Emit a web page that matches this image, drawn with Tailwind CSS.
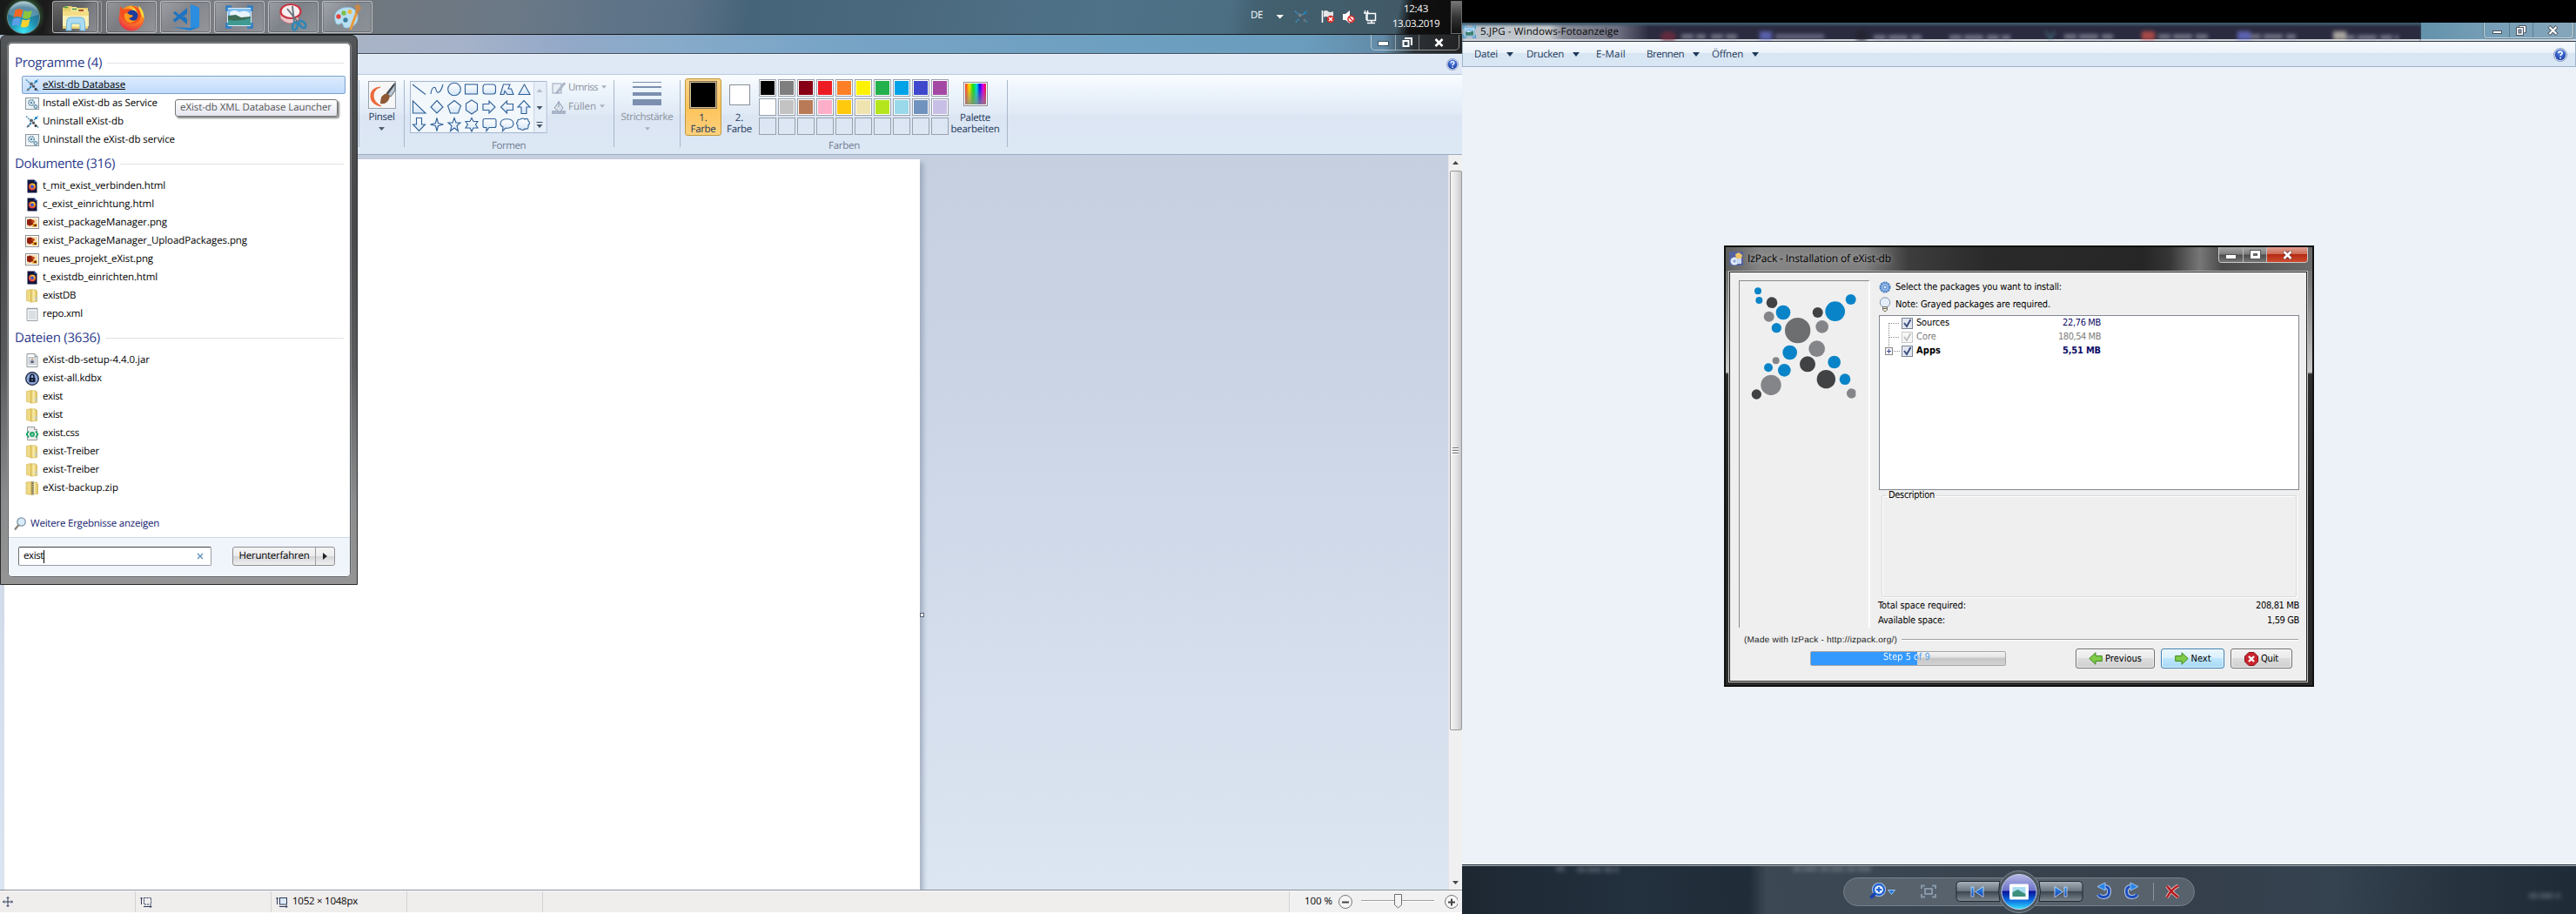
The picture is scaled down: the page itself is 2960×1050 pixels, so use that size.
<!DOCTYPE html>
<html lang="de">
<head>
<meta charset="utf-8">
<title>Desktop</title>
<script src="https://cdn.jsdelivr.net/npm/@tailwindcss/browser@4"></script>
</head>
<body class="w-[2960px] h-[1050px] overflow-hidden bg-black flex font-['Open_Sans','Noto_Sans',sans-serif] text-[11.5px] leading-[16px] text-black font-stretch-[92%] [text-rendering:geometricPrecision]">

<svg class="absolute size-0">
  <defs>
    <linearGradient id="gold" x1="0" x2="1"><stop offset="0" stop-color="#e0c35c"/><stop offset=".45" stop-color="#fbeeb0"/><stop offset="1" stop-color="#d9b94f"/></linearGradient>
    <linearGradient id="glass" x1="0" y1="0" x2="0" y2="1"><stop offset="0" stop-color="#fff"/><stop offset="1" stop-color="#d5e6f7"/></linearGradient>
    <linearGradient id="blueBtn" x1="0" y1="0" x2="0" y2="1"><stop offset="0" stop-color="#2f9bf5"/><stop offset="1" stop-color="#1234a8"/></linearGradient>
    <radialGradient id="orb" cx=".5" cy=".95" r=".95"><stop offset="0" stop-color="#39e6f5"/><stop offset=".45" stop-color="#1f8fb0"/><stop offset=".8" stop-color="#2e6a8a"/><stop offset="1" stop-color="#a9c9cf"/></radialGradient>
    <radialGradient id="orbGlow"><stop offset="0.5" stop-color="#5fd070" stop-opacity=".6"/><stop offset="1" stop-color="#3c7a40" stop-opacity="0"/></radialGradient>
    <radialGradient id="help" cx=".5" cy=".3" r=".8"><stop offset="0" stop-color="#5b8bea"/><stop offset="1" stop-color="#0d2f9c"/></radialGradient>
    <radialGradient id="fox" cx=".65" cy=".2" r=".9"><stop offset="0" stop-color="#ffe23c"/><stop offset=".45" stop-color="#ff8a1c"/><stop offset="1" stop-color="#e5224e"/></radialGradient>
    <symbol id="i-exist" viewBox="0 0 16 16"><path d="M1 1.500l5 5M5.500 11l-4.500 4M10 6l5-4.500M9.500 9l5.500 5.500" stroke="#2f83b5" stroke-width="1.300" stroke-dasharray="2 1" fill="none"/><circle cx="7" cy="6.500" r="2" fill="#5c6a73"/><circle cx="9.500" cy="9.200" r="1.600" fill="#555"/><circle cx="12.500" cy="3.500" r="1.600" fill="#1c84c4"/><circle cx="3.500" cy="12.800" r="1.400" fill="#777"/><circle cx="12" cy="12.500" r="1.500" fill="#3b3b3b"/><circle cx="6" cy="10" r="1.200" fill="#1c84c4"/></symbol>
    <symbol id="i-bat" viewBox="0 0 16 16"><rect x=".5" y="1.500" width="15" height="13" fill="#eef4f8" stroke="#8d979e"/><circle cx="7" cy="7" r="3.300" fill="#dbeaf2" stroke="#5f8aa3" stroke-width="1.500" stroke-dasharray="1.500 .8"/><circle cx="7" cy="7" r="1.200" fill="#5f8aa3"/><circle cx="12" cy="11.500" r="2" fill="#c6dcea" stroke="#4e7d99"/></symbol>
    <symbol id="i-html" viewBox="0 0 16 16"><path d="M2.500 .5h8l3 3v12h-11z" fill="#10143c"/><path d="M10.500 .5v3h3z" fill="#3a6bc4"/><circle cx="8" cy="8.500" r="4" fill="url(#fox)"/><circle cx="8" cy="8.200" r="2" fill="#4557c4"/></symbol>
    <symbol id="i-png" viewBox="0 0 16 16"><rect x=".5" y="1.500" width="15" height="13" fill="#fff" stroke="#8e8e8e"/><rect x="2" y="3" width="12" height="10" fill="#f6ddb0"/><path d="M2 4.500l4-1 3 1.500v5l-4 1.500-3-1.500z" fill="#8f1d0c"/><circle cx="9" cy="6.500" r="1.800" fill="#c1440e"/><path d="M9 9h4.500v3.500H8z" fill="#e19a17"/><circle cx="11.500" cy="11" r="1.300" fill="#5e2608"/></symbol>
    <symbol id="i-folder" viewBox="0 0 16 16"><path d="M1.500 1.500l5-1v14l-5-1z" fill="#eed985" stroke="#d2b553" stroke-width=".6"/><path d="M6.500 .8h5l2 1.500v12l-7 .9z" fill="url(#gold)" stroke="#cfae46" stroke-width=".6"/><path d="M11.500 9h1.500v4h-1.500z" fill="#b5cfdc"/></symbol>
    <symbol id="i-text" viewBox="0 0 16 16"><path d="M2 1.500h12v14H2z" fill="#f3f5f7" stroke="#9aa3aa"/><path d="M3 .5v2M5.500 .5v2M8 .5v2M10.500 .5v2M13 .5v2" stroke="#8d969c"/><path d="M4 5h8M4 7h8M4 9h8M4 11h8M4 13h8" stroke="#b3bec6" stroke-width=".8"/></symbol>
    <symbol id="i-jar" viewBox="0 0 16 16"><path d="M2 .5h9l3 3v12H2z" fill="#fcfcfc" stroke="#8f9699"/><path d="M11 .5v3h3" fill="#ddd" stroke="#8f9699"/><rect x="4" y="4.500" width="8" height="8" fill="#d6dde2" stroke="#9fa8ae" stroke-width=".6"/><path d="M6 8.500h4l-.5 2.500h-3z" fill="#557"/><path d="M8 5.500v2.500" stroke="#d6702a"/></symbol>
    <symbol id="i-kdbx" viewBox="0 0 16 16"><circle cx="8" cy="8" r="7.300" fill="#8fa9d6" stroke="#15203a" stroke-width="1.300"/><rect x="4.500" y="7" width="7" height="5" rx=".6" fill="#131a33"/><path d="M6 7V5.300a2 2 0 014 0V7" fill="none" stroke="#131a33" stroke-width="1.500"/><path d="M8 8.500v2" stroke="#8fa9d6"/></symbol>
    <symbol id="i-css" viewBox="0 0 16 16"><path d="M2.500 .5h8l3 3v12h-11z" fill="#ececec" stroke="#9b9b9b"/><path d="M10.500 .5v3h3" fill="#fff" stroke="#9b9b9b"/><path d="M4 5.500L1.500 9 4 12.500M12 5.500L14.500 9 12 12.500" fill="none" stroke="#0aa05c" stroke-width="1.600"/><circle cx="8" cy="9" r="2.200" fill="none" stroke="#0aa05c" stroke-width="1.400"/><path d="M6 9h4" stroke="#0aa05c"/></symbol>
    <symbol id="i-zip" viewBox="0 0 16 16"><path d="M1 1l6-.5v15L1 14.500z" fill="#eed985" stroke="#cfae46" stroke-width=".6"/><path d="M7 1h6l1.500 2v11.500H7z" fill="url(#gold)" stroke="#cfae46" stroke-width=".6"/><path d="M8.500 .5v15" stroke="#555" stroke-width="2.600" stroke-dasharray="1 .8"/></symbol>
    <symbol id="i-help" viewBox="0 0 16 16"><circle cx="8" cy="8" r="7.500" fill="#e5ecf8" stroke="#6d84b5" stroke-width=".8"/><circle cx="8" cy="8" r="6.200" fill="url(#help)"/><path d="M5.800 6.200C5.800 3.400 10.300 3.500 10.200 6.100c0 1.500-2.100 1.700-2.100 3.200M8.100 10.800v1.700" fill="none" stroke="#fff" stroke-width="1.600"/></symbol>
    <symbol id="i-photo" viewBox="0 0 16 16"><rect x="2" y="2.500" width="12" height="11" fill="#fff" stroke="#6fa7cf"/><path d="M3 3.500h10v4H3z" fill="#8fc6ef"/><path d="M3 7.500l4 1 6-1.500v5.500H3z" fill="#3b7f74"/><path d="M.5 4.500v-4h4M11.500 .5h4v4M15.500 11.500v4h-4M4.500 15.500h-4v-4" fill="none" stroke="#4b9ad4" stroke-width="1.600"/></symbol>
  </defs>
</svg>

<!-- Left monitor -->
<div class="relative w-[1680px] h-[1050px] flex flex-col overflow-hidden bg-white shrink-0">

  <!-- Taskbar -->
  <div class="h-[40px] shrink-0 flex border-b border-[#16191c] bg-[linear-gradient(100deg,#181a19_0px,#1b1b1b_55px,#6b6d72_105px,#7c7e85_200px,#70777f_420px,#6a7886_590px,#5f7488_700px,#5a7085_780px,#466479_850px,#4a687d_1000px,#4f7288_1250px,#4c6e83_1395px,#42606f_1425px,#425a68_1585px,#111_1600px,#0b0b0b_1680px)]">
    <svg class="w-[60px] h-[39px] shrink-0" viewBox="0 0 60 39">
      <circle cx="28" cy="18" r="24" fill="url(#orbGlow)"/>
      <circle cx="27" cy="20" r="18.500" fill="url(#orb)" stroke="#7a9aa0" stroke-width=".8"/>
      <path d="M10 17a17 15 0 0134 0q-15 6-34 0z" fill="#fff" opacity=".22"/>
      <path d="M17.500 11.500q4.500-2.500 8.800 0L24.500 20q-4.500-2-9 .3z" fill="#f26522"/>
      <path d="M27.800 12.300q4.500 2.300 8.900-.6L35 20.200q-4.500 2.600-8.900.5z" fill="#8cc63e"/>
      <path d="M15 21.800q4.500-2.300 8.900-.3l-1.900 8q-4.300-2-8.500.6z" fill="#5a9fe8"/>
      <path d="M25.700 22.200q4.400 2.200 8.800-.4l-2 8.300q-4.300 2.500-8.700.3z" fill="#ffd32e"/>
    </svg>
    <div class="flex pt-px gap-[4px]">
      <div class="w-[58px] h-[37px] flex">
        <div class="w-[53px] rounded-[3px] border border-[#c9cacc]/80 ring-1 ring-inset ring-black/20 bg-[linear-gradient(135deg,#fff5,#fff1_45%,#fff3)] flex items-center justify-center">
          <svg class="w-[34px] h-[32px]" viewBox="0 0 34 32"><path d="M2 5l4-2h6l2 2h17v24H2z" fill="#e8cf6d"/><path d="M12 4h6l1 3h12v20H8z" fill="#f5e59b"/><path d="M2 9h30v17H2z" fill="#fbf0b6"/><path d="M2 9h30v5H2z" fill="#f3dd85"/><path d="M4 4.500h4M13 6.500h5M20 8h6" stroke="#3e9e49" stroke-width="1.500"/><path d="M21 8h5" stroke="#c4302b" stroke-width="1.500"/><path d="M6 31l1-12q1-3 4-3h12q3 0 4 3l1 12h-6v-8H12v8z" fill="#a9dbf3" stroke="#6fb4da"/></svg>
        </div>
        <div class="w-[4px] border-r border-y rounded-r-[3px] border-[#aaabad]/80"></div>
      </div>
      <div class="w-[58px] h-[37px] rounded-[3px] border border-[#c9cacc]/80 ring-1 ring-inset ring-black/20 bg-[linear-gradient(135deg,#fff4,#fff1_45%,#fff3)] flex items-center justify-center">
        <svg class="w-[32px] h-[32px]" viewBox="0 0 32 32"><circle cx="16" cy="17" r="14.500" fill="url(#fox)"/><path d="M3 3q2 3 5 4 5-2 9 0l-3 3q-4 0-5 3l3 3q5 5 10 1 2-2 1-6-2-6-7-8 8-1 11 8 1 9-7 12-8 2-13-4-6-6-4-14z" fill="#f4501f"/><circle cx="17" cy="14" r="6.500" fill="#1c3c9e"/><path d="M8 12q4-2 6 1 3 0 4 1-2 3-5 3 3 4 8 2-4 5-10 2-4-4-3-9z" fill="#ff9a1c"/><path d="M24 2q7 6 6.500 16l-4-7z" fill="#ffd83a"/></svg>
      </div>
      <div class="w-[58px] h-[37px] rounded-[3px] border border-[#c9cacc]/80 ring-1 ring-inset ring-black/20 bg-[linear-gradient(135deg,#fff4,#fff1_45%,#fff3)] flex items-center justify-center">
        <svg class="w-[34px] h-[32px]" viewBox="0 0 34 32"><path d="M23 1l10 4v22l-10 4-21-4 21 1z" fill="#1e7fd0"/><path d="M23 1v27l10-1V5z" fill="#2a8de0"/><path d="M19 5v19L3 11l2-2 9 7z" fill="#1c74c2"/><path d="M19 5v6L5 21.500 2.500 19z" fill="#1c74c2"/><path d="M19 11.500v6l-4-3z" fill="#7e8692"/></svg>
      </div>
      <div class="w-[58px] h-[37px] rounded-[3px] border border-[#c9cacc]/80 ring-1 ring-inset ring-black/20 bg-[linear-gradient(135deg,#fff4,#fff1_45%,#fff3)] flex items-center justify-center">
        <svg class="w-[32px] h-[28px]" viewBox="0 0 32 28"><rect x="2" y="3" width="28" height="21" fill="#d9edf9"/><path d="M3 4h26v11H3z" fill="#7fbdf0"/><path d="M5 8q6-4 11 0 7-3 12 1v5H5z" fill="#e8f4fc"/><path d="M3 12l9-1 6 3 11-1v6H3z" fill="#3d6e57"/><path d="M3 17q12 2 26-2v8H3z" fill="#3f9a92"/><path d="M1.500 7V1.500H7M25 1.500h5.500V7M30.500 20v5.500H25M7 25.500H1.500V20" fill="none" stroke="#2f7ec4" stroke-width="2.600"/></svg>
      </div>
      <div class="w-[58px] h-[37px] rounded-[3px] border border-[#c9cacc]/80 ring-1 ring-inset ring-black/20 bg-[linear-gradient(135deg,#fff4,#fff1_45%,#fff3)] flex items-center justify-center">
        <svg class="w-[34px] h-[34px]" viewBox="0 0 34 34"><path d="M2 11v7q10 11 21 2v-9z" fill="#e9c6ca" stroke="#b35b64" stroke-width=".8"/><ellipse cx="14" cy="10" rx="11.500" ry="8" fill="#f7eff0" stroke="#c93440" stroke-width="2.200"/><path d="M10 7l12 15M16 4l2 18" stroke="#6a7580" stroke-width="2"/><ellipse cx="19" cy="27" rx="2.800" ry="4.500" fill="none" stroke="#2d86b5" stroke-width="2.600" transform="rotate(15 19 27)"/><ellipse cx="27.500" cy="25" rx="2.800" ry="4.800" fill="none" stroke="#2d86b5" stroke-width="2.600" transform="rotate(-40 27.500 25)"/></svg>
      </div>
      <div class="w-[58px] h-[37px] rounded-[3px] border border-[#c9cacc]/80 ring-1 ring-inset ring-black/20 bg-[linear-gradient(135deg,#fff5,#fff2_45%,#fff3)] flex items-center justify-center">
        <svg class="w-[34px] h-[32px]" viewBox="0 0 34 32"><path d="M3 20Q0 9 12 5q14-3 17 8 2 12-11 15-6 1-6-4-1-3-4 0-4 1-5-4z" fill="#b9dff2" stroke="#7fb6d6" stroke-width=".8"/><circle cx="7" cy="15" r="2.700" fill="#e2443b"/><circle cx="13" cy="11" r="2.700" fill="#7bbf45"/><circle cx="20" cy="9.500" r="2.500" fill="#f1b83a"/><circle cx="15" cy="19" r="2.700" fill="#3b7f9e"/><path d="M19 30l7-19 3 1-7 18z" fill="#e79a3c"/><path d="M26 11l1-5-2-4q4 1 5-2 1 4 3 5l-4 7z" fill="#c98847"/></svg>
      </div>
    </div>
    <div class="grow"></div>
    <div class="flex items-center text-white w-[253px] shrink-0">
      <span class="w-[28px] -mt-[3px] pl-[10px]"><span data-w="14">DE</span></span>
      <svg class="w-[135px] h-[39px] shrink-0" viewBox="1455 0 135 39">
        <path d="M1466.500 17h8.500l-4.200 4.500z" fill="#fff"/>
        <g transform="translate(1487 11)" opacity=".85"><path d="M1 1.500l5 5M5.500 11l-4.500 4M10 6l5-4.500M9.500 9l5.500 5.500" stroke="#3d9bd6" stroke-width="1.500" stroke-dasharray="2 1" fill="none"/><circle cx="7" cy="6.500" r="2" fill="#7b8a93"/><circle cx="9.500" cy="9.200" r="1.600" fill="#555"/><circle cx="12.500" cy="3.500" r="1.600" fill="#1c84c4"/><circle cx="12" cy="12.500" r="1.500" fill="#777"/></g>
        <path d="M1519.500 12v14" stroke="#fff" stroke-width="1.600"/><path d="M1521 13q3-2 5 0t6 0v7q-3 2-6 0t-5 0z" fill="#e6e6e6"/><circle cx="1529" cy="22" r="4.300" fill="#d3302c"/><path d="M1527 20l4 4m0-4l-4 4" stroke="#fff" stroke-width="1.400"/>
        <path d="M1543 16h3l5-4v15l-5-4h-3z" fill="#fff"/><circle cx="1552.500" cy="22" r="3.600" fill="#fff" stroke="#d3302c" stroke-width="1.600"/><path d="M1550 19.500l5 5" stroke="#d3302c" stroke-width="1.500"/>
        <path d="M1571 15.500h9.500v8h-9.500zM1576 24v2M1571 26.500h9" fill="none" stroke="#fff" stroke-width="1.500"/><path d="M1568.500 12v3M1571.500 12v3M1567 15h6M1570 16v7" stroke="#fff" stroke-width="1.400"/>
      </svg>
      <div class="w-[56px] flex flex-col items-center gap-px ml-[9px] -mt-px shrink-0"><span data-w="28">12:43</span><span data-w="54">13.03.2019</span></div>
      <div class="w-[13px] h-[38px] ml-[12px] border border-[#6b6b6b] bg-linear-to-b from-[#777] via-[#333] to-[#111] shrink-0"></div>
    </div>
  </div>

  <!-- Paint title bar -->
  <div class="h-[22px] shrink-0 flex justify-end border-b border-[#46515e] bg-[linear-gradient(90deg,#a9b3c6_411px,#a5b2c9_530px,#92a8c8_660px,#88abca_760px,#78a4c6_950px,#6d9fc0_1300px,#6a9cbd_1500px,#628ba7_1590px,#2c3136_1625px,#222_1680px)]">
    <div class="mr-[3px] w-[102px] h-[18px] rounded-b-[5px] border border-t-0 border-white/50 flex text-white">
      <div class="w-[28px] border-r border-white/40 flex items-end justify-center pb-[5px]"><div class="w-[11px] h-[4px] bg-white ring-1 ring-black/40"></div></div>
      <div class="w-[27px] border-r border-white/40 flex items-center justify-center"><svg class="w-[12px] h-[12px]" viewBox="0 0 12 12"><path d="M4 2V1h7v7h-1M1.500 4h6v6h-6z" fill="none" stroke="#fff" stroke-width="2"/></svg></div>
      <div class="grow flex items-center justify-center"><svg class="w-[11px] h-[10px]" viewBox="0 0 11 10"><path d="M1.500 1l8 8M9.500 1l-8 8" stroke="#fff" stroke-width="2.600"/></svg></div>
    </div>
  </div>
  <!-- Ribbon tabs -->
  <div class="h-[24px] shrink-0 border-t border-[#edf3fa] border-b border-b-[#b9cbdf] bg-[#dfe9f5] flex justify-end items-center pr-[4px]"><svg class="size-[14px]"><use href="#i-help"/></svg></div>

  <!-- Ribbon -->
  <div class="h-[92px] shrink-0 border-b border-[#9badc4] bg-[linear-gradient(180deg,#fafdff,#eef5fc_18%,#dfe9f5_50%,#dbe5f3_51%,#dde8f5)] pl-[412px] pt-[6px] flex text-[#1e395b]">
    <div class="w-px h-[77px] bg-[#a9b8cb] shrink-0"></div>
    <div class="w-[51px] flex flex-col items-center shrink-0">
      <svg class="w-[32px] h-[32px] mt-px" viewBox="0 0 32 32"><rect x=".5" y=".5" width="31" height="31" fill="#f6f6f6" stroke="#9aa4ae"/><path d="M14 7Q2 8 3 19q1 8 12 10-9-5-9-12 0-7 8-10z" fill="#ec6a3c" stroke="#ec6a3c"/><path d="M31 2L21 14l5 4 5-7z" fill="#b9c6d1" stroke="#5c6873"/><path d="M30 4l-8 11" stroke="#3c4650" stroke-width="2"/><path d="M22 14q-8 1-8 12 8 2 11-8z" fill="#8d5a35"/></svg>
      <span class="mt-[2px]" data-w="30">Pinsel</span>
      <svg class="w-[7px] h-[4px] mt-[3px]" viewBox="0 0 7 4"><path d="M0 0h7L3.500 4z" fill="#4f5b6b"/></svg>
    </div>
    <div class="w-px h-[77px] bg-[#a9b8cb] shrink-0"></div>
    <div class="w-[240px] shrink-0 flex flex-col pl-[6px]">
      <div class="flex h-[68px] pt-px">
        <svg class="w-[158px] h-[60px] shrink-0" viewBox="0 0 158 60" fill="url(#glass)" stroke="#2f6097" stroke-width="1.100">
          <rect x=".5" y=".5" width="156.500" height="59" fill="#f2f7fc" stroke="#a5b8d0"/>
          <path d="M142.500 1h14v58h-14z" fill="#e6eef8" stroke="none"/><path d="M142.500 1v58" stroke="#cbd8e8"/>
          <path d="M3 4l15 11.500" fill="none"/>
          <path d="M24 15c1-8 5-10 6-5s5 5 8-6" fill="none"/>
          <circle cx="51" cy="9.500" r="7.300"/><rect x="63.500" y="4" width="14" height="11"/><rect x="84" y="4" width="14.500" height="11" rx="3"/>
          <path d="M104 15.500L107.500 4h7.500l-2 5h3.500l2.500 6.500h-7l-3-4-1 4z"/><path d="M131.500 4l6.500 11.500h-13z"/>
          <path d="M3.500 23v14H18z"/><path d="M31 22.500l7 7.500-7 7-7-7z"/><path d="M51 22.500l7.500 6-3 8.500h-9l-3-8.500z"/><path d="M71 22l6.500 4v7.500L71 38l-6.500-4.500V26z"/>
          <path d="M84 26.500h7V23l7 7-7 7v-3.500h-7z"/><path d="M118.500 26.500h-7V23l-7 7 7 7v-3.500h7z"/><path d="M128 37.500V30h-4l7-7.500 7 7.500h-4v7.500z"/>
          <path d="M7.500 42.500V50h-4l7 7.500 7-7.500h-4v-7.500z"/><path d="M31 42.500l1.500 6 6 1.500-6 1.500-1.500 6-1.500-6-6-1.500 6-1.500z"/><path d="M51 42.500l2 5.500h5l-4 3.500 1.500 6L51 54l-4.500 3.500 1.500-6-4-3.500h5z"/><path d="M71 42.500l2 4h5l-2.500 3.500 2.500 4h-5l-2 4-2-4h-5l2.500-4-2.500-3.500h5z"/>
          <path d="M86 43.500h11q2 0 2 2v6q0 2-2 2h-6l-3 4v-4h-2q-2 0-2-2v-6q0-2 2-2z"/><path d="M104 49c0-7 15-7 15 0 0 5-6 5.500-9 5l-3.500 3.500.5-4.500q-3-1-3-4z"/><path d="M127 44q3-2 5 0 4-2 4 2 3 2 0 5 1 5-4 4-3 3-5 0-4 1-3-4-3-3 0-4-1-3 3-3z"/>
          <g stroke="none"><path d="M145.500 13h7l-3.500-4z" fill="#b4bfce"/><path d="M145.500 29h7l-3.500 4zM145.500 50h7l-3.500 4z" fill="#44546a"/></g><path d="M145.500 47.500h7" stroke="#44546a"/>
        </svg>
        <div class="flex flex-col gap-[6px] pl-[5px] text-[#8c929c]">
          <div class="flex items-center h-[16px]"><svg class="w-[16px] h-[14px] mr-[3px]" viewBox="0 0 16 14"><rect x="1" y="2" width="10" height="11" fill="#e9eef5" stroke="#9ba7b9"/><path d="M14 1L6 11l-1 2 2-.5L15.500 2z" fill="#cfd7e3" stroke="#8c9ab0"/></svg><span data-w="34">Umriss</span><svg class="w-[6px] h-[4px] ml-[4px] -mt-[2px]" viewBox="0 0 7 4"><path d="M0 0h7L3.500 4z" fill="#a9b1be"/></svg></div>
          <div class="flex items-center h-[16px]"><svg class="w-[16px] h-[15px] mr-[3px]" viewBox="0 0 16 15"><path d="M0 11h16v4H0z" fill="#a9b5c8"/><path d="M8 1l5 7-4 5-6-5z" fill="#d9e0ea" stroke="#8c9ab0"/><path d="M8 0v7" stroke="#8c9ab0"/></svg><span data-w="32">Füllen</span><svg class="w-[6px] h-[4px] ml-[4px] -mt-[2px]" viewBox="0 0 7 4"><path d="M0 0h7L3.500 4z" fill="#a9b1be"/></svg></div>
        </div>
      </div>
      <div class="pl-[94px]"><span class="text-[#6f7d93]" data-w="39">Formen</span></div>
    </div>
    <div class="w-px h-[77px] bg-[#a9b8cb] shrink-0"></div>
    <div class="w-[75px] shrink-0 flex flex-col items-center pt-[2px] text-[#8c929c]">
      <svg class="w-[33px] h-[28px]" viewBox="0 0 33 28" fill="#7c8fb0"><path d="M0 0h33v1H0zM0 5h33v2H0zM0 12h33v4H0zM0 20h33v7H0z"/></svg>
      <span class="mt-[5px]" data-w="60">Strichstärke</span>
      <svg class="w-[6px] h-[4px] mt-[3px]" viewBox="0 0 7 4"><path d="M0 0h7L3.500 4z" fill="#a9b1be"/></svg>
    </div>
    <div class="w-px h-[77px] bg-[#a9b8cb] shrink-0"></div>
    <div class="w-[375px] shrink-0 flex flex-col -mt-[2px] pl-[5px]">
      <div class="h-[70px] flex">
        <div class="w-[42px] h-[66px] rounded-[3px] border border-[#c09a3e] bg-linear-to-b from-[#fbd38a] via-[#fdc35a] to-[#fdd17c] flex flex-col items-center pt-[2px] leading-[13px]">
          <div class="w-[32px] h-[32px] border border-[#7d6f55] p-px bg-[#d9c193]"><div class="h-full bg-black"></div></div>
          <span class="mt-[4px]">1.</span><span data-w="29">Farbe</span>
        </div>
        <div class="w-[41px] flex flex-col items-center pt-[7px] leading-[13px]">
          <div class="w-[24px] h-[24px] border border-[#8a8f97] bg-white"></div>
          <span class="mt-[8px]">2.</span><span data-w="29">Farbe</span>
        </div>
        <div id="swatches" class="grid grid-cols-10 gap-[2px] pt-px pl-[2px] w-[220px] content-start shrink-0"></div>
        <div class="w-[60px] flex flex-col items-center pt-[4px] pl-px leading-[13px]">
          <div class="w-[28px] h-[28px] border border-[#8a8f97] p-px bg-white"><div class="h-full bg-[linear-gradient(180deg,#8880_20%,#888c),linear-gradient(90deg,#e33,#fd0_20%,#1d1_38%,#0dd_55%,#11e_70%,#d0e_85%,#e13)]"></div></div>
          <span class="mt-[7px]" data-w="35">Palette</span><span data-w="56">bearbeiten</span>
        </div>
      </div>
      <div class="pl-[165px]"><span class="text-[#6f7d93]" data-w="36">Farben</span></div>
    </div>
    <div class="w-px h-[77px] bg-[#a9b8cb] shrink-0"></div>
  </div>

  <!-- Canvas -->
  <div class="h-[845px] shrink-0 flex border-b border-[#8a8f94] bg-[linear-gradient(180deg,#c5cfdf,#cbd5e6_35%,#dce6f2)]">
    <div class="w-[1664px] pl-[5px] pt-[5px] flex">
      <div class="w-[1052px] h-full bg-white shadow-[4px_4px_5px_#8f9bb0aa]"></div>
      <div class="w-[5px] h-[5px] mt-[521px] border border-[#55606e] bg-white"></div>
    </div>
    <div class="w-[16px] bg-[#f0f0f0] border-l border-[#e2e5ea] flex flex-col items-center pt-[7px]">
      <svg class="w-[7px] h-[4px] shrink-0" viewBox="0 0 7 4"><path d="M0 4h7L3.500 0z" fill="#444"/></svg>
      <div class="w-[14px] h-[643px] mt-[7px] rounded-[2px] border border-[#979797] bg-linear-to-r from-[#f5f5f5] via-[#e4e4e6] to-[#c9cacd] flex items-center justify-center"><div class="w-[7px] h-[8px] bg-[repeating-linear-gradient(180deg,#777_0_1px,#fff_1px_2px,#ddd_2px_3px)]"></div></div>
      <div class="grow"></div>
      <svg class="w-[7px] h-[4px] mb-[6px] shrink-0" viewBox="0 0 7 4"><path d="M0 0h7L3.500 4z" fill="#444"/></svg>
    </div>
  </div>

  <!-- Paint status bar -->
  <div class="h-[25px] shrink-0 flex items-center bg-[#f0eded] border-t border-[#fafafa]">
    <div class="w-[156px] h-full border-r border-[#d5d2d5] flex items-center pl-[3px] shrink-0"><svg class="size-[12px]" viewBox="0 0 12 12"><path d="M6 .5v11M.5 6h11M4.500 2L6 .5 7.500 2M4.500 10L6 11.500 7.500 10M2 4.500L.5 6 2 7.500M10 4.500L11.500 6 10 7.500" fill="none" stroke="#2b3a5a"/></svg></div>
    <div class="w-[156px] h-full border-r border-[#d5d2d5] flex items-center pl-[5px] shrink-0"><svg class="w-[14px] h-[13px]" viewBox="0 0 14 13" fill="none" stroke="#2b3a5a"><path d="M1.500 1v8M0 2.500L1.500 1 3 2.500M4 11.500h9M11.500 10l1.500 1.500-1.500 1.500"/><rect x="4.500" y="1.500" width="8" height="7.500" stroke-dasharray="2 1"/></svg></div>
    <div class="w-[156px] h-full border-r border-[#d5d2d5] flex items-center pl-[5px] shrink-0"><svg class="w-[14px] h-[13px] mr-[5px]" viewBox="0 0 14 13" fill="none" stroke="#2b3a5a"><path d="M1.500 1v8M0 2.500L1.500 1 3 2.500M4 11.500h9M11.500 10l1.500 1.500-1.500 1.500"/><rect x="4.500" y="1.500" width="8" height="7.500" fill="#dceaf8"/></svg><span data-w="75">1052 × 1048px</span></div>
    <div class="w-[156px] h-full border-r border-[#d5d2d5] shrink-0"></div>
    <div class="w-[858px] h-full border-r border-[#d5d2d5] shrink-0"></div>
    <div class="grow h-full bg-[#f1f1f1] flex items-center pl-[17px]">
      <span data-w="32">100 %</span>
      <svg class="w-[138px] h-[24px] ml-[6px] shrink-0" viewBox="0 0 138 24"><g fill="#f6f6f6" stroke="#777"><circle cx="9" cy="12" r="7.500"/><circle cx="131" cy="12" r="7.500"/></g><path d="M5 12.500h8M127 12.500h8M131 8.500v8" stroke="#444" stroke-width="2"/><path d="M27 10.500h84" stroke="#a0a0a0"/><path d="M27 11.500h84" stroke="#fff"/><path d="M65.500 3.500h8v12l-4 3.500-4-3.500z" fill="#f4f4f4" stroke="#6f6f6f"/></svg>
    </div>
  </div>
  <div class="h-[2px] bg-white shrink-0"></div>

  <!-- Start menu overlay -->
  <div class="absolute left-0 top-[40px] w-[411px] h-[632px] border border-[#2b2b2b] rounded-t-[7px] bg-[linear-gradient(180deg,#545759,#4b4d4f_8%,#47494b_35%,#5a5c5d_60%,#8b8c8d_85%,#949494)] p-[8px] pr-[7px]">
    <div class="h-full rounded-[5px] border border-[#5d6064] ring-1 ring-[#a0a3a6]/60 bg-white overflow-hidden flex flex-col">
      <div class="grow pt-[9px] pl-[7px] pr-[8px]" id="results"></div>
      <div class="h-[31px] flex items-center pl-[6px] text-[#151c70] shrink-0">
        <svg class="w-[14px] h-[16px] mr-[5px]" viewBox="0 0 14 16"><circle cx="8.500" cy="5.500" r="4.700" fill="#d7ecf8" stroke="#7e95a6" stroke-width="1.300"/><path d="M5.500 9L1 14.500" stroke="#8a8378" stroke-width="2.200"/></svg>
        <span data-w="148">Weitere Ergebnisse anzeigen</span>
      </div>
      <div class="h-[45px] bg-[#f0f4fb] border-t border-[#ccd9ea] flex shrink-0 pt-[10px] pl-[11px]">
        <div class="w-[222px] h-[22px] rounded-[2px] border border-[#9a9da3] border-t-[#3f4247] border-l-[#6d7075] bg-white flex items-center pl-[5px] pr-[8px]"><span data-w="23">exist</span><span class="w-px h-[15px] bg-black"></span><span class="grow"></span><svg class="size-[8px]" viewBox="0 0 8 8"><path d="M1 1l6 6M7 1L1 7" stroke="#5b8fb9" stroke-width="1.300"/></svg></div>
        <div class="ml-[24px] h-[22px] w-[118px] rounded-[3px] border border-[#8e8f91] bg-[linear-gradient(180deg,#f4f4f4,#ececee_48%,#d5d6d9_52%,#f0f0f1)] flex">
          <div class="w-[95px] border-r border-[#9b9c9e] flex items-center justify-center"><span data-w="81">Herunterfahren</span></div>
          <div class="grow flex items-center justify-center"><svg class="w-[5px] h-[8px]" viewBox="0 0 5 8"><path d="M0 0v8l5-4z" fill="#222"/></svg></div>
        </div>
      </div>
    </div>
  </div>
  <!-- Tooltip -->
  <div class="absolute left-[201px] top-[114px] w-[187px] h-[20px] rounded-[3px] border border-[#767676] bg-linear-to-b from-white to-[#e4e5f0] shadow-[2px_2px_2px_#0007] flex items-center pl-[5px] text-[#575757]"><span data-w="174">eXist-db XML Database Launcher</span></div>
</div>

<!-- Right monitor: photo viewer -->
<div class="w-[1280px] h-[1050px] shrink-0 flex flex-col">
  <div class="h-[26px] bg-black shrink-0"></div>
  <div class="relative h-[22px] shrink-0 border-b border-[#2b3340] bg-[#2b2b40] flex overflow-hidden">
    <div class="w-[1102px] shrink-0 flex items-center shadow-[inset_0_3px_3px_#3f5a6c,inset_0_-2px_0_#cfd3da] bg-[linear-gradient(90deg,#b9c3cc,#c6c9cc_100px,#8d8f9b_115px,#6d6e7f_180px,#2b2b40_215px)]">
      <svg class="size-[15px] mr-[5px] ml-px shrink-0"><use href="#i-photo"/></svg>
      <span class="text-[#0b0b0b]" data-w="159">5.JPG - Windows-Fotoanzeige</span>
      <svg class="w-[900px] h-[20px] shrink-0 ml-[42px] blur-[2px]" viewBox="1902 26 900 20">
        <g opacity=".7"><ellipse cx="1917" cy="41" rx="9" ry="6" fill="#7e2b3c"/><path d="M1932 41h28M1966 41h30M2153 42h55M2240 42h70M2372 41h56M2480 41h58M2584 41h54M2692 42h64" stroke="#9a9aad" stroke-width="5" stroke-dasharray="14 3 22 4"/><path d="M2022 35h14v10h-14z" fill="#6d78d8"/><path d="M2040 41h56" stroke="#8587a0" stroke-width="5"/><circle cx="2139" cy="40" r="7" fill="#23232d"/><path d="M2351 35l5 9 5-9" stroke="#4f8f95" stroke-width="2" fill="none"/><path d="M2461 35h15v10h-15z" fill="#e0574a"/><path d="M2571 35h15v10h-15z" fill="#737be0"/><path d="M2681 35h15v10h-15z" fill="#e0d9c8"/></g>
      </svg>
    </div>
    <div class="grow bg-[linear-gradient(90deg,#6392ab,#78a0b8_50%,#86a6ba)] shadow-[inset_0_-2px_0_#cfdbe4] flex justify-end">
      <div class="mr-[3px] w-[103px] h-[18px] rounded-b-[4px] border border-t-0 border-[#dfe8ee]/70 ring-1 ring-[#4d6472]/60 flex">
        <div class="w-[29px] border-r border-[#4d6472]/60 flex items-end justify-center pb-[4px]"><div class="w-[11px] h-[4px] bg-white border border-[#4b5560]"></div></div>
        <div class="w-[27px] border-r border-[#4d6472]/60 flex items-center justify-center"><svg class="w-[12px] h-[12px]" viewBox="0 0 12 12"><path d="M3.500 2.500v-2h8v8h-2" fill="#fff" stroke="#4b5560"/><rect x=".5" y="2.500" width="8" height="9" fill="#fff" stroke="#4b5560"/><rect x="3" y="5" width="3" height="4" fill="#9ab" stroke="#4b5560"/></svg></div>
        <div class="grow flex items-center justify-center"><svg class="w-[13px] h-[12px]" viewBox="0 0 13 12"><path d="M2 1.500l9 9M11 1.500l-9 9" stroke="#4b5560" stroke-width="4"/><path d="M2.500 2l8 8M10.500 2l-8 8" stroke="#fff" stroke-width="2.200"/></svg></div>
      </div>
    </div>
  </div>
  <div class="h-[29px] shrink-0 border border-t-white border-[#a0b3c9] border-b-[#9fb2ca] bg-[linear-gradient(180deg,#f4f9fd,#eaf2f9_45%,#d8e5f2_46%,#d9e7f4)] flex items-center pl-[13px] text-[#1e395b]">
    <div class="w-[60px] flex items-center"><span data-w="27">Datei</span><svg class="w-[8px] h-[5px] ml-[10px]" viewBox="0 0 8 5"><path d="M0 0h8L4 5z" fill="#1e395b"/></svg></div>
    <div class="w-[80px] flex items-center"><span data-w="43">Drucken</span><svg class="w-[8px] h-[5px] ml-[10px]" viewBox="0 0 8 5"><path d="M0 0h8L4 5z" fill="#1e395b"/></svg></div>
    <div class="w-[58px] flex items-center"><span data-w="34">E-Mail</span></div>
    <div class="w-[75px] flex items-center"><span data-w="43">Brennen</span><svg class="w-[8px] h-[5px] ml-[10px]" viewBox="0 0 8 5"><path d="M0 0h8L4 5z" fill="#1e395b"/></svg></div>
    <div class="flex items-center"><span data-w="36">Öffnen</span><svg class="w-[8px] h-[5px] ml-[10px]" viewBox="0 0 8 5"><path d="M0 0h8L4 5z" fill="#1e395b"/></svg></div>
    <div class="grow"></div>
    <svg class="size-[16px] mr-[9px]"><use href="#i-help"/></svg>
  </div>

  <!-- Photo: installer window -->
  <div class="h-[916px] shrink-0 bg-[#edf2f9] flex flex-col items-center pt-[205px]">
    <div class="w-[678px] h-[507px] border-2 border-[#111] bg-[linear-gradient(180deg,#6b6b6b,#777_8%,#c9c9c9_28.5%,#2d2d2d_29%,#222_60%,#2b2b2b)] flex flex-col font-['DejaVu_Sans_Condensed','DejaVu_Sans',sans-serif] font-stretch-condensed text-[11px] leading-[14px] pb-[3px]">
      <div class="h-[27px] shrink-0 flex justify-between bg-[linear-gradient(90deg,#5d5d5d,#858585_40px,#7f7f7f_160px,#3d3d3d_210px,#2a2a2a_300px,#262626_480px,#353535_510px,#777_545px,#4b4b4b_570px,#6a6a6a)]">
        <div class="flex items-center pl-[4px] font-['Open_Sans','Noto_Sans',sans-serif] font-stretch-[92%] text-[12px] -mt-px">
          <svg class="w-[16px] h-[16px] mr-[5px]" viewBox="0 0 16 16"><rect width="16" height="16" fill="#5562a0"/><circle cx="6" cy="11" r="4.500" fill="#dfe9f8"/><circle cx="6" cy="11" r="1.700" fill="#8fa8d6"/><path d="M7 3l4-2 4 3-1 4H8z" fill="#f0c56a"/><path d="M8 8h6v6H9z" fill="#c8d7f2"/></svg>
          <span class="[text-shadow:0_0_6px_#bbb]" data-w="165">IzPack - Installation of eXist-db</span>
        </div>
        <div class="mr-[5px] h-[18px] w-[103px] rounded-b-[4px] border border-t-0 border-[#c9c9c9] flex overflow-hidden">
          <div class="w-[28px] border-r border-[#bbb] bg-[linear-gradient(180deg,#a5a5a5,#7d7d7d_48%,#4b4b4b_52%,#777)] flex items-end justify-center pb-[4px]"><div class="w-[11px] h-[4px] bg-white ring-1 ring-[#555]"></div></div>
          <div class="w-[27px] border-r border-[#bbb] bg-[linear-gradient(180deg,#a5a5a5,#7d7d7d_48%,#4b4b4b_52%,#777)] flex items-center justify-center"><div class="w-[11px] h-[9px] border-3 border-white bg-[#666] ring-1 ring-[#555]"></div></div>
          <div class="grow bg-[linear-gradient(180deg,#e0a093,#cf6a55_45%,#b52a14_50%,#cf4c30)] flex items-center justify-center"><svg class="w-[11px] h-[10px]" viewBox="0 0 11 10"><path d="M1.500 .5l8 9M9.500 .5l-8 9" stroke="#633" stroke-width="4"/><path d="M1.500 1l8 8M9.500 1l-8 8" stroke="#fff" stroke-width="2.500"/></svg></div>
        </div>
      </div>
      <div class="grow ml-[3px] mr-[5px] border border-[#c4c4c4] ring-1 ring-inset ring-[#222] bg-[#efefef] flex flex-col pt-[10px] pl-[11px] pr-[10px]">
        <div class="h-[399px] flex shrink-0">
          <div class="w-[151px] h-full border-l border-t border-[#8b8b8b] border-r-2 border-r-white shrink-0">
            <svg class="w-[149px] h-[150px]" viewBox="87 161 447 450" fill="#0a84c8">
              <circle cx="150" cy="195" r="12"/><circle cx="154" cy="227" r="12"/><circle cx="237" cy="269" r="25"/><circle cx="214" cy="322" r="17"/><circle cx="416" cy="265" r="34"/><circle cx="470" cy="224" r="18"/><circle cx="260" cy="407" r="25"/><circle cx="186" cy="459" r="15"/><circle cx="241" cy="468" r="22"/><circle cx="413" cy="440" r="22"/><circle cx="450" cy="499" r="19"/>
              <g fill="#414244"><circle cx="198" cy="235" r="19"/><circle cx="356" cy="269" r="18"/><circle cx="321" cy="447" r="27"/><circle cx="385" cy="499" r="32"/><circle cx="145" cy="551" r="17"/></g>
              <g fill="#848588"><circle cx="188" cy="283" r="18"/><circle cx="287" cy="331" r="44" fill="#6d6e70"/><circle cx="371" cy="318" r="22"/><circle cx="353" cy="394" r="28"/><circle cx="212" cy="435" r="12"/><circle cx="195" cy="519" r="35"/><path d="M487 539a17 17 0 100 18z"/></g>
            </svg>
          </div>
          <div class="grow pl-[10px] flex flex-col">
            <div class="h-[16px] flex items-center shrink-0"><svg class="w-[14px] h-[14px] mr-[5px]" viewBox="0 0 14 14"><circle cx="7" cy="7" r="5" fill="#a9c8ef" stroke="#4a7fc4" stroke-width="3" stroke-dasharray="2 .6"/><circle cx="7" cy="7" r="4.500" fill="#9dc0ec" stroke="#4a7fc4" stroke-width=".7"/><circle cx="7" cy="7" r="2" fill="#dcebfb" stroke="#4a7fc4"/></svg><span data-w="191">Select the packages you want to install:</span></div>
            <div class="h-[24px] flex items-center shrink-0 pb-px"><svg class="w-[14px] h-[17px] mr-[5px]" viewBox="0 0 14 17"><circle cx="7" cy="6.500" r="5.700" fill="#e3eefa" stroke="#8394ab"/><path d="M4.500 11.500h5v3.500l-1.500 1.500h-2L4.500 15z" fill="#f1e9c6" stroke="#666" stroke-width=".9"/><path d="M4.500 13.500h5" stroke="#666"/></svg><span data-w="178">Note: Grayed packages are required.</span></div>
            <div class="h-[201px] w-[483px] shrink-0 border border-[#828790] bg-white flex">
              <svg class="w-[40px] h-[60px] shrink-0" viewBox="0 0 40 60"><path d="M10.500 8v28M11 8.500h12M11 24.500h12M16 40.500h7" stroke="#888" stroke-dasharray="1 1" fill="none"/><rect x="6.500" y="36.500" width="8" height="8" fill="#f4f6fa" stroke="#888"/><path d="M8 40.500h5M10.500 38v5" stroke="#3b4b8c"/>
                <g><rect x="25.500" y="2.500" width="12" height="12" fill="#e3e8f0" stroke="#7b8494"/><path d="M28 8l3 4 4.500-8" fill="none" stroke="#3b4e7e" stroke-width="2"/></g>
                <g opacity=".45"><rect x="25.500" y="18.500" width="12" height="12" fill="#eee" stroke="#888"/><path d="M28 24l3 4 4.500-8" fill="none" stroke="#777" stroke-width="2"/></g>
                <g><rect x="25.500" y="34.500" width="12" height="12" fill="#e3e8f0" stroke="#7b8494"/><path d="M28 40l3 4 4.500-8" fill="none" stroke="#3b4e7e" stroke-width="2"/></g></svg>
              <div class="w-[214px] pl-[2px] leading-[16px]">
                <div class="flex justify-between"><span data-w="38">Sources</span><span class="text-[#0d0d66]" data-w="44">22,76 MB</span></div>
                <div class="flex justify-between text-[#7c7c7c]"><span data-w="23">Core</span><span data-w="49">180,54 MB</span></div>
                <div class="flex justify-between font-bold"><span data-w="28">Apps</span><span class="text-[#0d0d66]" data-w="44">5,51 MB</span></div>
              </div>
            </div>
            <div class="h-[124px] shrink-0 pt-[3px] ml-[3px] w-[477px] -mt-px">
              <fieldset class="h-[121px] border border-[#d8dade] rounded-[2px] shadow-[inset_1px_1px_0_#fff,1px_1px_0_#fff] pl-[5px]"><legend class="px-[2px] leading-[8px]"><span data-w="53">Description</span></legend></fieldset>
            </div>
            <div class="flex justify-between h-[17px] items-center w-[483px] shrink-0 mt-px"><span class="-ml-px" data-w="101">Total space required:</span><span data-w="50">208,81 MB</span></div>
            <div class="flex justify-between h-[17px] items-center w-[483px] shrink-0"><span class="-ml-px" data-w="77">Available space:</span><span data-w="37">1,59 GB</span></div>
          </div>
        </div>
        <div class="flex items-center h-[14px] mt-[8px] ml-[6px] font-['Liberation_Sans',sans-serif] font-stretch-normal text-[10px] text-[#222]"><span data-w="176">(Made with IzPack - http://izpack.org/)</span><span class="grow h-[2px] ml-[5px] -mt-[3px] border-t border-[#a0a0a0] bg-white"></span></div>
        <div class="flex pl-[82px] mt-[2px]">
          <div class="relative w-[225px] h-[17px] mt-[3px] border border-[#a6a6a6] rounded-[2px] bg-[linear-gradient(180deg,#f4f4f4,#e3e3e3_40%,#c6c6c6_50%,#d3d3d3)]">
            <div class="h-full w-[122px] bg-[#3399fe]"></div>
            <div class="absolute left-[83px] -top-px h-[15px] text-transparent bg-clip-text bg-[linear-gradient(90deg,#fff_39px,#4c9ff0_39px)]"><span data-w="54">Step 5 of 9</span></div>
          </div>
          <div class="flex gap-[7px] ml-[80px]">
            <div class="w-[91px] h-[23px] rounded-[3px] border border-[#707070] ring-1 ring-inset ring-white/70 bg-[linear-gradient(180deg,#f2f2f2,#ebebeb_48%,#dddddd_50%,#cfcfcf)] flex items-center justify-center"><svg class="w-[16px] h-[15px] mr-[3px]" viewBox="0 0 16 15"><path d="M8 .8v3.700h7.300v6H8v3.700L.8 7.500z" fill="#7ecb48" stroke="#3f8a1f"/></svg><span data-w="42">Previous</span></div>
            <div class="w-[73px] h-[23px] rounded-[3px] border border-[#3c7fb1] ring-1 ring-inset ring-white/70 bg-[linear-gradient(180deg,#eaf6fd,#d9f0fc_48%,#bee6fd_50%,#a7d9f5)] flex items-center justify-center"><svg class="w-[16px] h-[15px] mr-[3px]" viewBox="0 0 16 15"><path d="M8 .8v3.700H.7v6H8v3.700l7.200-6.700z" fill="#7ecb48" stroke="#3f8a1f"/></svg><span data-w="23">Next</span></div>
            <div class="w-[71px] h-[23px] rounded-[3px] border border-[#707070] ring-1 ring-inset ring-white/70 bg-[linear-gradient(180deg,#f2f2f2,#ebebeb_48%,#dddddd_50%,#cfcfcf)] flex items-center justify-center"><svg class="w-[16px] h-[16px] mr-[3px]" viewBox="0 0 16 16"><path d="M5 .5h6L15.500 5v6L11 15.500H5L.5 11V5z" fill="#c9242c" stroke="#8c1218"/><path d="M5 5l6 6M11 5l-6 6" stroke="#fff" stroke-width="2.400"/></svg><span data-w="20">Quit</span></div>
          </div>
        </div>
      </div>
    </div>
  </div>

  <!-- Viewer control strip -->
  <div class="h-[57px] shrink-0 overflow-hidden border-t border-[#26303a] shadow-[inset_0_1px_0_#a9b1b8] bg-[linear-gradient(90deg,#1d2732,#1f2b37_70px,#23303d_200px,#202c38_330px,#3c4853_350px,#3a4651_500px,#353f4b_800px,#35424f_1000px,#26333f_1150px,#1f2c38)] flex justify-center">
    <svg class="w-[1280px] h-[56px] shrink-0" viewBox="1680 994 1280 56">
      <defs>
        <linearGradient id="nav" x1="0" y1="0" x2="0" y2="1"><stop offset="0" stop-color="#a9b2ba"/><stop offset=".48" stop-color="#69747f"/><stop offset=".5" stop-color="#3b444e"/><stop offset="1" stop-color="#7e8891"/></linearGradient>
        <linearGradient id="ball" x1="0" y1="0" x2="0" y2="1"><stop offset="0" stop-color="#b7b9e6"/><stop offset=".45" stop-color="#6d73c9"/><stop offset=".5" stop-color="#0a159c"/><stop offset=".75" stop-color="#0b6ee0"/><stop offset="1" stop-color="#38e0ff"/></linearGradient>
        <filter id="soft" filterUnits="userSpaceOnUse" x="1680" y="994" width="1280" height="56"><feGaussianBlur stdDeviation="2.500"/></filter>
      </defs>
      <g filter="url(#soft)" opacity=".3" stroke="#aab5be" stroke-width="6"><path d="M1788 998h10M1812 999h48M2060 998h90M2906 1029h36" stroke-dasharray="10 2 16 3"/></g>
      <rect x="2118.500" y="1008.500" width="403" height="32" rx="16" fill="#57626d" stroke="#76818b"/>
      <circle cx="2320" cy="1024.500" r="24" fill="#4d5863" stroke="#7d8892"/>
      <path d="M2252 1012.500h46q-3 12 0 23h-46q-4 0-4-4v-15q0-4 4-4z" fill="url(#nav)" stroke="#20272e"/>
      <path d="M2389 1012.500h-46q3 12 0 23h46q4 0 4-4v-15q0-4-4-4z" fill="url(#nav)" stroke="#20272e"/>
      <circle cx="2320" cy="1024.500" r="20" fill="url(#ball)" stroke="#c7d2e6"/>
      <rect x="2309" y="1015.500" width="22" height="18" rx="1.500" fill="#fff"/><path d="M2312.500 1019h15v11h-15z" fill="#a9dcf0"/><path d="M2312.500 1025l6-3 9 5v3h-15z" fill="#3f8f7d"/>
      <g stroke="#cfe2f7" stroke-width=".8" fill="url(#blueBtn)"><path d="M2265 1019h3v11h-3zM2279 1018.500v12l-9.500-6z"/><path d="M2375 1019h-3v11h3zM2361 1018.500v12l9.500-6z"/></g>
      <circle cx="2159" cy="1022" r="6" fill="#cfe0f7" stroke="#bcd2f0" stroke-width="4"/><circle cx="2159" cy="1022" r="6" fill="#dce9fb" stroke="#1e5fd0" stroke-width="2.300"/><path d="M2156 1022h6M2159 1019v6" stroke="#1e5fd0" stroke-width="1.800"/><path d="M2154.500 1026.500l-5 5" stroke="#173fae" stroke-width="3.500"/>
      <path d="M2169.500 1022.500h8l-4 5z" fill="#1e77e0" stroke="#bcd8f5" stroke-width=".8"/>
      <g fill="none" stroke="#8797a8" stroke-width="2"><path d="M2208 1021v-3.500h4M2220 1017.500h4v3.500M2224 1027v3.500h-4M2212 1030.500h-4v-3.500"/><rect x="2212" y="1021" width="8" height="6"/></g>
      <g fill="none"><g stroke="#b5c8e8" stroke-width="5"><path d="M2418 1018.500q6 0 5.500 6t-6.500 6q-4 0-5.500-3M2449 1018.500q-6 0-5.500 6t6.500 6q4 0 5.500-3"/></g><g stroke="#1c4cbc" stroke-width="3"><path d="M2418 1018.500q6 0 5.500 6t-6.500 6q-4 0-5.500-3M2449 1018.500q-6 0-5.500 6t6.500 6q4 0 5.500-3"/></g></g>
      <path d="M2419 1014v9l-9-4.500zM2448 1014v9l9-4.500z" fill="#2585ea" stroke="#b5d2f2" stroke-width=".8"/>
      <path d="M2474.500 1014v21" stroke="#8a949d"/>
      <path d="M2490 1018q5 7 13 13M2503 1017.500q-8 4-13 13.500" stroke="#e8c0c0" stroke-width="4" fill="none"/><path d="M2490 1018q5 7 13 13M2503 1017.500q-8 4-13 13.500" stroke="#b5181c" stroke-width="2.400" fill="none"/>
    </svg>
  </div>
</div>

<script>
  const groups = [
    ['Programme (4)', 100, [['exist', 'eXist-db Database', 95], ['bat', 'Install eXist-db as Service', 132], ['exist', 'Uninstall eXist-db', 93], ['bat', 'Uninstall the eXist-db service', 152]]],
    ['Dokumente (316)', 115, [['html', 't_mit_exist_verbinden.html', 141], ['html', 'c_exist_einrichtung.html', 128], ['png', 'exist_packageManager.png', 143], ['png', 'exist_PackageManager_UploadPackages.png', 235], ['png', 'neues_projekt_eXist.png', 127], ['html', 't_existdb_einrichten.html', 132], ['folder', 'existDB', 38], ['text', 'repo.xml', 46]]],
    ['Dateien (3636)', 98, [['jar', 'eXist-db-setup-4.4.0.jar', 123], ['kdbx', 'exist-all.kdbx', 68], ['folder', 'exist', 23], ['folder', 'exist', 23], ['css', 'exist.css', 42], ['folder', 'exist-Treiber', 65], ['folder', 'exist-Treiber', 65], ['zip', 'eXist-backup.zip', 87]]]
  ];
  document.getElementById('results').innerHTML = groups.map(([title, w, items], g) =>
    `<div class="h-[26px] flex items-center text-[15px] text-[#2b3a8c]"><span data-w="${w}">${title}</span><span class="grow h-px ml-[6px] mr-[-1px] bg-[#dfe2e6]"></span></div>
     <div class="pt-[2px] mb-[4px] ml-[8px] mr-[-3px]">` + items.map(([icon, text, tw], i) =>
      `<div class="h-[21px] flex items-center pl-[3px] border rounded-[2px] ${g === 0 && i === 0 ? 'border-[#7da2ce] bg-linear-to-b from-[#dcebfc] to-[#c1dbfc] underline' : 'border-transparent'}"><svg class="size-[16px] mr-[4px]"><use href="#i-${icon}"/></svg><span data-w="${tw}">${text}</span></div>`).join('') + '</div>').join('');

  const palette = ['#000', '#7f7f7f', '#880015', '#ed1c24', '#ff7f27', '#fff200', '#22b14c', '#00a2e8', '#3f48cc', '#a349a4',
    '#fff', '#c3c3c3', '#b97a57', '#ffaec9', '#ffc90e', '#efe4b0', '#b5e61d', '#99d9ea', '#7092be', '#c8bfe7'];
  document.getElementById('swatches').innerHTML = Array.from({ length: 30 }, (_, i) =>
    `<div class="size-[20px] border border-[#9aa1ac] ${palette[i] ? 'bg-white' : ''} p-px"><div class="h-full" style="background:${palette[i] || 'transparent'}"></div></div>`).join('');

  const labels = [...document.querySelectorAll('[data-w]')];
  for (const el of labels) el.classList.add('whitespace-nowrap', 'shrink-0');
  function fitLabels() {
    for (const el of labels) {
      el.style.letterSpacing = '0px';
      const r = document.createRange();
      r.selectNodeContents(el);
      const gap = (Number(el.dataset.w) - r.getBoundingClientRect().width) / el.textContent.length;
      el.style.letterSpacing = gap.toFixed(3) + 'px';
    }
  }
  // The stylesheet may arrive after this script: fit again whenever the styled layout changes.
  fitLabels();
  new MutationObserver(fitLabels).observe(document.head, { childList: true, subtree: true, characterData: true });
  addEventListener('load', fitLabels);
  (function waitForStyles() {
    if (getComputedStyle(document.body).display === 'flex') fitLabels();
    else requestAnimationFrame(waitForStyles);
  })();
</script>
</body>
</html>
